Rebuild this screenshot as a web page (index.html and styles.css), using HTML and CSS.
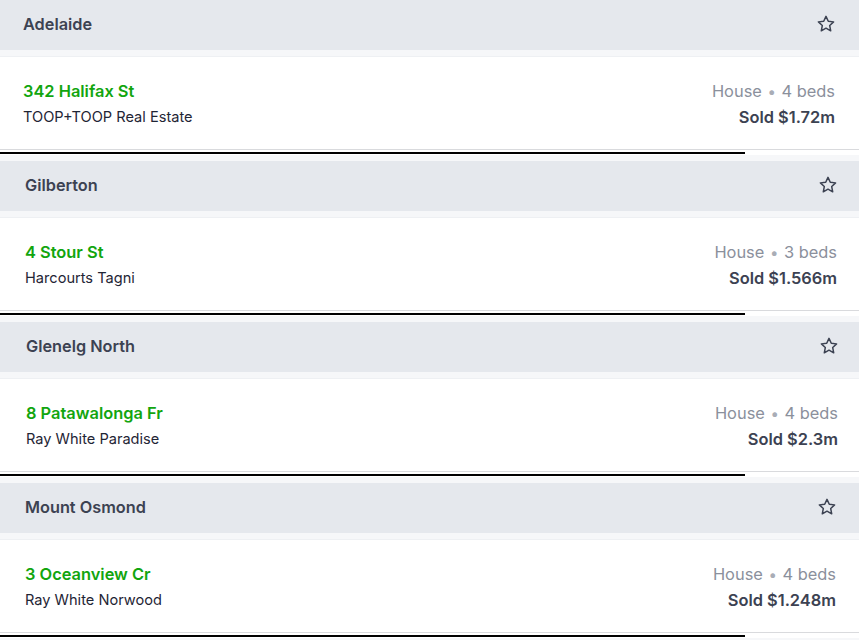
FILE: index.html
```html
<!DOCTYPE html>
<html>
<head>
<meta charset="utf-8">
<link rel="stylesheet" href="styles.css">
</head>
<body>
<div class="list">
  <section class="suburb s1">
    <div class="head"><div class="inner"><span class="name">Adelaide</span><svg class="star" viewBox="0 0 24 24"><path d="M12 2.8l2.75 5.85 6.35.8-4.65 4.4 1.2 6.3L12 17.05l-5.65 3.1 1.2-6.3L2.9 9.45l6.35-.8z"/></svg></div></div>
    <div class="strip"></div>
    <div class="card"><div class="inner">
      <div class="left"><div class="addr">342 Halifax St</div><div class="agency">TOOP+TOOP Real Estate</div></div>
      <div class="right"><div class="type">House <span class="dot">•</span> 4 beds</div><div class="price">Sold $1.72m</div></div>
    </div></div>
    <div class="rule"></div>
    <div class="tail"></div>
  </section>
  <section class="suburb s2">
    <div class="head"><div class="inner"><span class="name">Gilberton</span><svg class="star" viewBox="0 0 24 24"><path d="M12 2.8l2.75 5.85 6.35.8-4.65 4.4 1.2 6.3L12 17.05l-5.65 3.1 1.2-6.3L2.9 9.45l6.35-.8z"/></svg></div></div>
    <div class="strip"></div>
    <div class="card"><div class="inner">
      <div class="left"><div class="addr">4 Stour St</div><div class="agency">Harcourts Tagni</div></div>
      <div class="right"><div class="type">House <span class="dot">•</span> 3 beds</div><div class="price">Sold $1.566m</div></div>
    </div></div>
    <div class="rule"></div>
    <div class="tail"></div>
  </section>
  <section class="suburb s3">
    <div class="head"><div class="inner"><span class="name">Glenelg North</span><svg class="star" viewBox="0 0 24 24"><path d="M12 2.8l2.75 5.85 6.35.8-4.65 4.4 1.2 6.3L12 17.05l-5.65 3.1 1.2-6.3L2.9 9.45l6.35-.8z"/></svg></div></div>
    <div class="strip"></div>
    <div class="card"><div class="inner">
      <div class="left"><div class="addr">8 Patawalonga Fr</div><div class="agency">Ray White Paradise</div></div>
      <div class="right"><div class="type">House <span class="dot">•</span> 4 beds</div><div class="price">Sold $2.3m</div></div>
    </div></div>
    <div class="rule"></div>
    <div class="tail"></div>
  </section>
  <section class="suburb s4">
    <div class="head"><div class="inner"><span class="name">Mount Osmond</span><svg class="star" viewBox="0 0 24 24"><path d="M12 2.8l2.75 5.85 6.35.8-4.65 4.4 1.2 6.3L12 17.05l-5.65 3.1 1.2-6.3L2.9 9.45l6.35-.8z"/></svg></div></div>
    <div class="strip"></div>
    <div class="card"><div class="inner">
      <div class="left"><div class="addr">3 Oceanview Cr</div><div class="agency">Ray White Norwood</div></div>
      <div class="right"><div class="type">House <span class="dot">•</span> 4 beds</div><div class="price">Sold $1.248m</div></div>
    </div></div>
    <div class="rule"></div>
    <div class="tail"></div>
  </section>
</div>
</body>
</html>
```

FILE: styles.css
```css
* { box-sizing: border-box; }
html, body { margin: 0; padding: 0; background: #ffffff; }
body {
  font-family: Inter, "Noto Sans", "Liberation Sans", sans-serif;
  color: #3c4252;
  width: 859px;
  height: 640px;
  overflow: hidden;
}
.list { display: flex; flex-direction: column; }
.suburb { display: flex; flex-direction: column; }
.head {
  height: 50px;
  background: #e5e8ed;
}
.head .inner { padding-bottom: 2px; }
.inner {
  height: 100%;
  display: flex;
  align-items: center;
  justify-content: space-between;
  padding-left: 23px;
  padding-right: 24px;
}
.s2 .inner { padding-left: 25px; padding-right: 22px; }
.s3 .inner { padding-left: 26px; padding-right: 21px; }
.s4 .inner { padding-left: 25px; padding-right: 23px; }
.name {
  font-size: 16.3px;
  font-weight: 600;
  color: #3c4252;
}
.star {
  width: 20px;
  height: 20px;
  fill: none;
  stroke: #3c4252;
  stroke-width: 1.8;
  stroke-linejoin: round;
  margin-right: -1px;
}
.strip {
  height: 7px;
  background: #f6f7f9;
  border-bottom: 1px solid #eef0f3;
}
.card {
  height: 93px;
  background: #ffffff;
  border-bottom: 1px solid #d9dadd;
}
.card .inner { align-items: stretch; padding-top: 24px; }
.left, .right { display: flex; flex-direction: column; gap: 7px; }
.right { align-items: flex-end; gap: 6px; }
.addr {
  font-size: 16.4px;
  font-weight: 600;
  color: #12a50e;
  line-height: 20px;
}
.agency {
  font-size: 14.6px;
  color: #1f2535;
  line-height: 19px;
}
.type {
  font-size: 16.4px;
  color: #8b909c;
  line-height: 20px;
}
.dot { color: #a9adb6; font-size: 15px; padding: 0 1px; }
.price {
  font-size: 16.4px;
  font-weight: 600;
  color: #3c4252;
  line-height: 19px;
}
.rule {
  width: 745px;
  height: 2px;
  margin-top: 2px;
  background: #000000;
}
.tail {
  height: 7px;
  background: linear-gradient(#ffffff 0 1px, #f6f7f9 1px);
}
```
